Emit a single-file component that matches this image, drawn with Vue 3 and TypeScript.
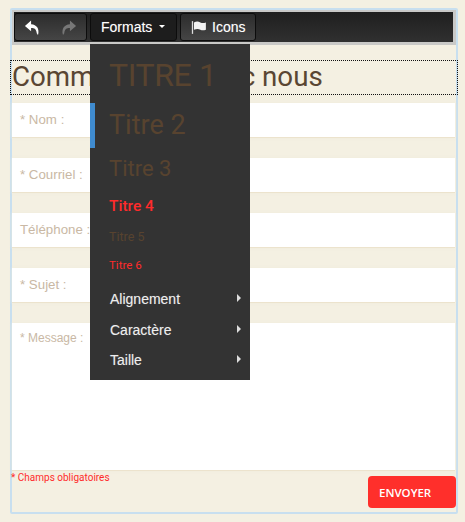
<script setup lang="ts">
const fields = ['* Nom :', '* Courriel :', 'Téléphone :', '* Sujet :']
const headings = [
  { label: 'TITRE 1', cls: 't1' },
  { label: 'Titre 2', cls: 't2' },
  { label: 'Titre 3', cls: 't3' },
  { label: 'Titre 4', cls: 't4' },
  { label: 'Titre 5', cls: 't5' },
  { label: 'Titre 6', cls: 't6' },
]
const submenus = ['Alignement', 'Caractère', 'Taille']
</script>

<template>
  <div class="frame">
    <div class="toolbar">
      <div class="inner">
        <div class="btn group">
          <span class="half">
            <svg width="17" height="17" viewBox="0 0 18 17"><path d="M7.500 1 1 6.800l6.500 5.700V9c3.600 0 5.600 1.300 6 5.500.6.800 1.100 2 1.500 1.500 1.400-6.500-1.500-10.500-7.500-11z" fill="#fff" /></svg>
          </span>
          <span class="half">
            <svg width="17" height="17" viewBox="0 0 18 17"><path d="M10.500 1 17 6.800l-6.500 5.700V9c-3.600 0-5.600 1.300-6 5.500-.6.800-1.100 2-1.500 1.500C1.600 9.500 4.500 5.500 10.500 5z" fill="#777" /></svg>
          </span>
        </div>
        <div class="btn active">Formats <i class="caret"></i></div>
        <div class="btn icons">
          <svg width="17" height="15" viewBox="0 0 20 17"><path d="M1 1h1.500v15H1z" fill="#ddd" /><path d="M3.500 2.500c3-1.500 5.500-1 7.500 0s4 1 6.500 0V11c-2.500 1-4.500 1-6.500 0s-4.500-1-7.500 0z" fill="#f2f2f2" /></svg>
          Icons
        </div>
      </div>
    </div>

    <h1 class="title">Communiquez avec nous</h1>

    <div class="form">
      <div v-for="f in fields" :key="f" class="field">{{ f }}</div>
      <div class="field message">* Message :</div>
    </div>

    <div class="foot">
      <span class="req">* Champs obligatoires</span>
      <button class="send">ENVOYER</button>
    </div>

    <div class="menu">
      <i class="marker"></i>
      <div v-for="h in headings" :key="h.label" class="head" :class="h.cls">{{ h.label }}</div>
      <div v-for="s in submenus" :key="s" class="sub">
        {{ s }}
        <i class="arrow"></i>
      </div>
    </div>
  </div>
</template>

<style>
html,
body {
  margin: 0;
  background: #f4f0e2;
}
</style>

<style scoped>
.frame {
  position: relative;
  box-sizing: border-box;
  width: 448px;
  height: 506px;
  margin: 8px 0 0 10px;
  border: 2px solid #c8dfef;
  border-radius: 2px;
  font-family: 'Liberation Sans', Arial, sans-serif;
}
.toolbar {
  box-sizing: border-box;
  height: 35px;
  padding: 2px 3px 3px 2px;
  background: #c9c9c7;
}
.inner {
  display: flex;
  gap: 3px;
  height: 30px;
  padding-top: 1px;
  box-sizing: border-box;
  background: linear-gradient(#1f1f1f, #303030);
}
.btn {
  box-sizing: border-box;
  height: 28px;
  display: flex;
  align-items: center;
  color: #fff;
  font-size: 14px;
  text-shadow: 0 0 1px rgba(255, 255, 255, 0.35);
  border: 1px solid #0c0c0c;
  border-radius: 3px;
  background: linear-gradient(#2c2c2c, #454545);
}
.group {
  width: 73px;
}
.half {
  width: 36px;
  display: flex;
  justify-content: center;
}
.active {
  width: 87px;
  padding-left: 10px;
  background: #1d1d1d;
}
.caret {
  margin: -2px 0 0 7px;
  border: 3px solid transparent;
  border-top-color: #fff;
  border-bottom-width: 0;
}
.icons {
  width: 76px;
  padding-left: 10px;
  gap: 4px;
}
.title {
  box-sizing: border-box;
  height: 35px;
  margin: 15px -2px 0 -2px;
  padding-left: 1px;
  border: 1px dotted #111;
  font-family: Roboto, sans-serif;
  font-size: 27.700px;
  font-weight: 400;
  line-height: 31px;
  color: #5a4633;
}
.form {
  display: flex;
  flex-direction: column;
  gap: 20px;
  margin: 8px 1px 0 0;
}
.field {
  box-sizing: border-box;
  height: 35px;
  padding: 0 8px;
  line-height: 34px;
  background: #fff;
  border-bottom: 1px solid #ece3cd;
  font-size: 13.300px;
  color: #c9b8a4;
  box-shadow: 0 0 3px rgba(240, 235, 220, 0.9);
}
.message {
  height: 148px;
  font-size: 12px;
  line-height: 30px;
}
.foot {
  display: flex;
  justify-content: space-between;
  align-items: flex-start;
}
.req {
  margin: 1px 0 0 -1px;
  font-family: Roboto, sans-serif;
  font-size: 10px;
  color: #ff2b2b;
}
.send {
  width: 88px;
  height: 32px;
  margin-top: 5px;
  padding: 0 0 0 11px;
  border: 0;
  border-radius: 4px;
  background: #ff2f2b;
  color: #fff;
  font-family: 'Open Sans', sans-serif;
  font-size: 11.500px;
  font-weight: 600;
  text-align: left;
}
.menu {
  position: absolute;
  left: 78px;
  top: 34px;
  width: 160px;
  height: 336px;
  padding-top: 10px;
  box-sizing: border-box;
  background: #333;
}
.marker {
  position: absolute;
  left: 0;
  top: 59px;
  width: 5px;
  height: 45px;
  background: #3f8bcf;
}
.head {
  padding-left: 19px;
  font-family: Roboto, sans-serif;
  color: #58432f;
}
.t1 {
  font-size: 32px;
  line-height: 42px;
  letter-spacing: -0.400px;
}
.t2 {
  padding-top: 2px;
  font-size: 27px;
  line-height: 55px;
}
.t3 {
  font-size: 22px;
  line-height: 32px;
}
.t4 {
  font-size: 15.500px;
  line-height: 42px;
  font-weight: 500;
  color: #ff2b2b;
}
.t5 {
  font-size: 12.500px;
  line-height: 20px;
}
.t6 {
  font-size: 11.500px;
  line-height: 37px;
  color: #ff2b2b;
}
.sub {
  position: relative;
  padding-left: 20px;
  font-size: 14px;
  line-height: 30.500px;
  color: #eee;
  text-shadow: 0 0 1px rgba(255, 255, 255, 0.3);
}
.arrow {
  position: absolute;
  right: 9px;
  top: 10px;
  border: 4px solid transparent;
  border-left-color: #ddd;
  border-right-width: 0;
}
</style>
